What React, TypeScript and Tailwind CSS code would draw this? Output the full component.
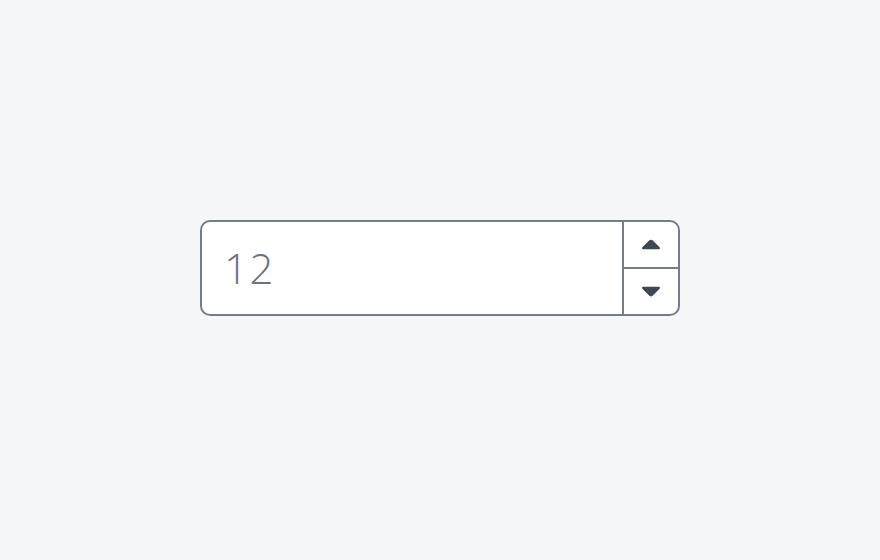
import React, { useState } from "react";

export default function App() {
  const [value, setValue] = useState(12);

  return (
    <div className="min-h-screen w-full bg-[#f6f7f9] flex justify-center pt-[220px]" style={{ fontFamily: "'Open Sans', 'Liberation Sans', sans-serif" }}>
      <div className="flex h-[96px] w-[480px] overflow-hidden rounded-[10px] border-2 border-[#777d87] bg-white">
        <div className="flex flex-1 items-center pl-[22px]">
          <span className="text-[42px] font-light text-[#6b7280] leading-none tracking-[1.5px]">{value}</span>
        </div>
        <div className="flex w-[56px] flex-col border-l-2 border-[#777d87]">
          <button
            className="flex flex-1 items-center justify-center border-b-2 border-[#777d87]"
            onClick={() => setValue(value + 1)}
          >
            <svg width="20" height="11" viewBox="0 0 20 11">
              <path d="M8.4 1.3 L1.4 8.2 C0.5 9.1 1.1 10.2 2.3 10.2 L17.7 10.2 C18.9 10.2 19.5 9.1 18.6 8.2 L11.6 1.3 C10.7 0.4 9.3 0.4 8.4 1.3 Z" fill="#3f4752" />
            </svg>
          </button>
          <button
            className="flex flex-1 items-center justify-center"
            onClick={() => setValue(value - 1)}
          >
            <svg width="20" height="11" viewBox="0 0 20 11">
              <path d="M8.4 9.7 L1.4 2.8 C0.5 1.9 1.1 0.8 2.3 0.8 L17.7 0.8 C18.9 0.8 19.5 1.9 18.6 2.8 L11.6 9.7 C10.7 10.6 9.3 10.6 8.4 9.7 Z" fill="#3f4752" />
            </svg>
          </button>
        </div>
      </div>
    </div>
  );
}
